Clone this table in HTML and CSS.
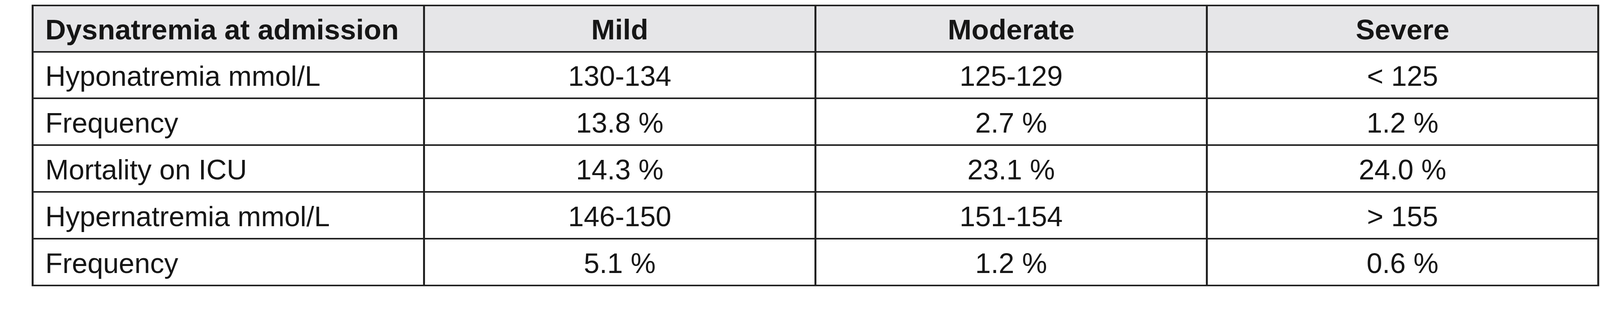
FILE: index.html
```html
<!DOCTYPE html>
<html lang="en">
<head>
<meta charset="utf-8">
<title>Dysnatremia at admission</title>
<link rel="stylesheet" href="styles.css">
</head>
<body>
<table class="grid">
  <thead>
    <tr>
      <th class="label">Dysnatremia at admission</th>
      <th>Mild</th>
      <th>Moderate</th>
      <th>Severe</th>
    </tr>
  </thead>
  <tbody>
    <tr><td class="label">Hyponatremia mmol/L</td><td>130-134</td><td>125-129</td><td>&lt; 125</td></tr>
    <tr><td class="label">Frequency</td><td>13.8 %</td><td>2.7 %</td><td>1.2 %</td></tr>
    <tr><td class="label">Mortality on ICU</td><td>14.3 %</td><td>23.1 %</td><td>24.0 %</td></tr>
    <tr><td class="label">Hypernatremia mmol/L</td><td>146-150</td><td>151-154</td><td>&gt; 155</td></tr>
    <tr><td class="label">Frequency</td><td>5.1 %</td><td>1.2 %</td><td>0.6 %</td></tr>
  </tbody>
</table>
</body>
</html>
```

FILE: styles.css
```css
html, body {
  margin: 0;
  padding: 0;
  background: #ffffff;
}

body {
  padding: 12px 0 0 81px;
  font-family: "Liberation Sans", Arial, sans-serif;
  color: #161616;
}

.grid {
  border-collapse: separate;
  border-spacing: 0;
  border-top: 4px solid #222222;
  border-left: 5px solid #222222;
  table-layout: fixed;
  width: 4013px;
}

.grid th,
.grid td {
  width: 997px;
  border-right: 5px solid #222222;
  border-bottom: 4px solid #222222;
  text-align: center;
  vertical-align: top;
  white-space: nowrap;
}

.grid th {
  padding: 4px 0 0 0;
  background: #e6e6e8;
  font-weight: bold;
  font-size: 73px;
  line-height: 111px;
}

.grid td {
  padding: 6px 0 0 0;
  font-size: 72px;
  line-height: 109px;
}

.grid tbody tr + tr td {
  line-height: 110px;
}

.grid .label {
  text-align: left;
  padding-left: 30px;
  width: 967px;
}
```
